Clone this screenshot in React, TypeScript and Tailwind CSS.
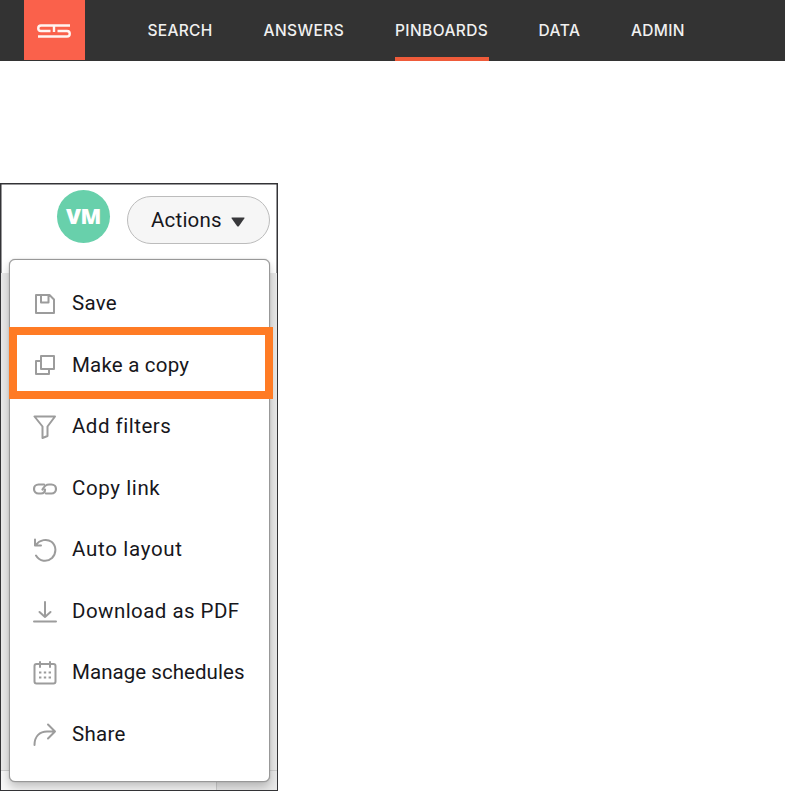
import type { ReactNode } from 'react';
import clsx from 'clsx';

const navItems = [
    { label: 'SEARCH', box: 'ml-[62.5px] w-[66px]', tracking: 'tracking-[0.3px]' },
    { label: 'ANSWERS', box: 'ml-[50px] w-[81px]', tracking: 'tracking-[0.45px]' },
    { label: 'PINBOARDS', box: 'ml-[50.5px] w-[93.5px]', tracking: 'tracking-[0.4px]', active: true },
    { label: 'DATA', box: 'ml-[50px] w-[42px]', tracking: 'tracking-[0.5px]' },
    { label: 'ADMIN', box: 'ml-[50.5px] w-[54px]', tracking: 'tracking-[0.3px]' },
];

function Icon({ children }: { children: ReactNode }) {
    return (
        <svg
            width="24"
            height="24"
            viewBox="0 0 24 24"
            fill="none"
            stroke="#9c9c9c"
            strokeWidth="2"
            strokeLinecap="round"
            strokeLinejoin="round"
            className="mt-[3px] shrink-0"
        >
            {children}
        </svg>
    );
}

const menuItems = [
    {
        label: 'Save',
        tracking: 'tracking-[0.3px]',
        icon: <path d="M3 3H16.5L21 7.5V21H3ZM8 3V10.5H15.5V3" />,
    },
    {
        label: 'Make a copy',
        tracking: 'tracking-[0.2px]',
        highlighted: true,
        icon: <path d="M8 3H21V16H8ZM8 8H3V21H16V16" />,
    },
    {
        label: 'Add filters',
        tracking: 'tracking-[0.5px]',
        icon: <path d="M1.5 1.5H22L14.5 11.5V21L9.5 23V11.5Z" />,
    },
    {
        label: 'Copy link',
        tracking: 'tracking-[0.6px]',
        icon: (
            <path
                strokeWidth="2.2"
                d="M11 7.5H5.5A4.5 4.5 0 0 0 5.5 16.5H8C11 16.5 12 14.5 12 12.5M13 16.5H18.5A4.5 4.5 0 0 0 18.5 7.5H16C12.5 7.5 11 9.5 9.5 12.5"
            />
        ),
    },
    {
        label: 'Auto layout',
        tracking: 'tracking-[0.7px]',
        icon: <path d="M2 1.5V7.5H8M2.5 7.2C7 1.5 14 0.5 18.5 3.8C23.5 8 23.7 15 19 20C14 24.5 6.5 23.5 3 17.5" />,
    },
    {
        label: 'Download as PDF',
        tracking: 'tracking-[0.45px]',
        icon: <path d="M12 2V17M6.5 12L12 17L17.5 12M1 21.5H23" />,
    },
    {
        label: 'Manage schedules',
        tracking: 'tracking-[0.05px]',
        icon: (
            <>
                <rect x="1.5" y="3" width="21" height="19.5" rx="2" />
                <path d="M7 1V6M17 1V6" />
                <path strokeLinecap="butt" strokeWidth="2.2" strokeDasharray="2.4 2.4" d="M6 11.5H18M6 16.5H18" />
            </>
        ),
    },
    {
        label: 'Share',
        tracking: 'tracking-[0.3px]',
        icon: <path d="M1.5 22C1.5 13 7 8.5 14 8.5H22M15 1.5L22 8.5L15 15.5" />,
    },
];

function NavBar() {
    return (
        <header className="flex h-[61px] bg-[#333333] pl-6 text-[#f0f0f0]">
            <div className="flex h-[60px] w-[61px] items-center justify-center bg-[#fa614b]">
                <svg width="34" height="14" viewBox="0 0 34 14" fill="none" stroke="#fff4f1" strokeWidth="2.4" className="mr-px mt-px">
                    <path d="M33 1.5H4A2.7 2.7 0 0 0 4 7H13.5M1 12.5H30A2.7 2.7 0 0 0 30 7H20.5M17 2V8" />
                </svg>
            </div>
            <nav className="flex font-['Inter',sans-serif] text-[15.5px] font-medium">
                {navItems.map((item) => (
                    <a
                        key={item.label}
                        className={clsx(
                            'flex h-[61px] items-center whitespace-nowrap border-b-4 pt-[5px]',
                            item.active ? 'border-[#ef5b3a]' : 'border-transparent',
                            item.box,
                            item.tracking,
                        )}
                    >
                        {item.label}
                    </a>
                ))}
            </nav>
        </header>
    );
}

function ActionsMenu() {
    return (
        <ul className="relative ml-2 mt-[15px] flex h-[523px] w-[261px] flex-col rounded-[6px] border border-[#989898] bg-white pt-[11.5px] shadow-[0_5px_10px_rgba(0,0,0,0.22),0_0_1px_#888]">
            {menuItems.map((item) => (
                <li key={item.label} className="relative flex h-[61.6px] shrink-0 items-center pl-[23px]">
                    <Icon>{item.icon}</Icon>
                    <span className={clsx('ml-[15px] mt-[2px] whitespace-nowrap', item.tracking)}>{item.label}</span>
                    {item.highlighted && (
                        <div className="absolute -left-px -top-[6px] h-[72px] w-[264px] border-8 border-[#ff7b24]" />
                    )}
                </li>
            ))}
        </ul>
    );
}

export default function App() {
    return (
        <div className="h-[791px] w-[785px] overflow-hidden bg-white">
            <NavBar />
            <section className="relative mt-[122px] h-[608px] w-[278px] overflow-hidden border border-[#333336] bg-white font-['Roboto',sans-serif] text-[20.5px] text-[#17171c] shadow-[inset_0_0_0_0.5px_#333336]">
                {/* page behind the open menu */}
                <div className="absolute inset-x-0 bottom-0 top-[89px] flex flex-col bg-[#e9e9e9]">
                    <div className="mt-auto flex h-[20px] border-t border-[#cfcfcf]">
                        <div className="w-[216px] border-r border-[#cfcfcf] bg-[#f7f7f7]" />
                    </div>
                </div>
                <div className="relative">
                    <div className="flex items-start pl-14 pt-[6px]">
                        <div className="flex size-[53px] items-center justify-center rounded-full bg-[#68d0ab] font-['Open_Sans',sans-serif] text-[21.5px] font-extrabold text-white">
                            <span className="tracking-[-0.3px]">VM</span>
                        </div>
                        <button className="ml-[17px] mt-[6px] flex h-12 w-[143px] items-center rounded-full border border-[#bcbcbc] bg-[#f6f6f6] pl-[23px]">
                            <span className="mt-px tracking-[0.2px]">Actions</span>
                            <svg width="14" height="10" viewBox="0 0 14 10" className="ml-[9px] mt-1">
                                <path d="M1 0.5H13Q14 0.5 13.3 1.5L8 9Q7 10 6 9L0.7 1.5Q0 0.5 1 0.5Z" fill="#38383b" />
                            </svg>
                        </button>
                    </div>
                    <ActionsMenu />
                </div>
            </section>
        </div>
    );
}
